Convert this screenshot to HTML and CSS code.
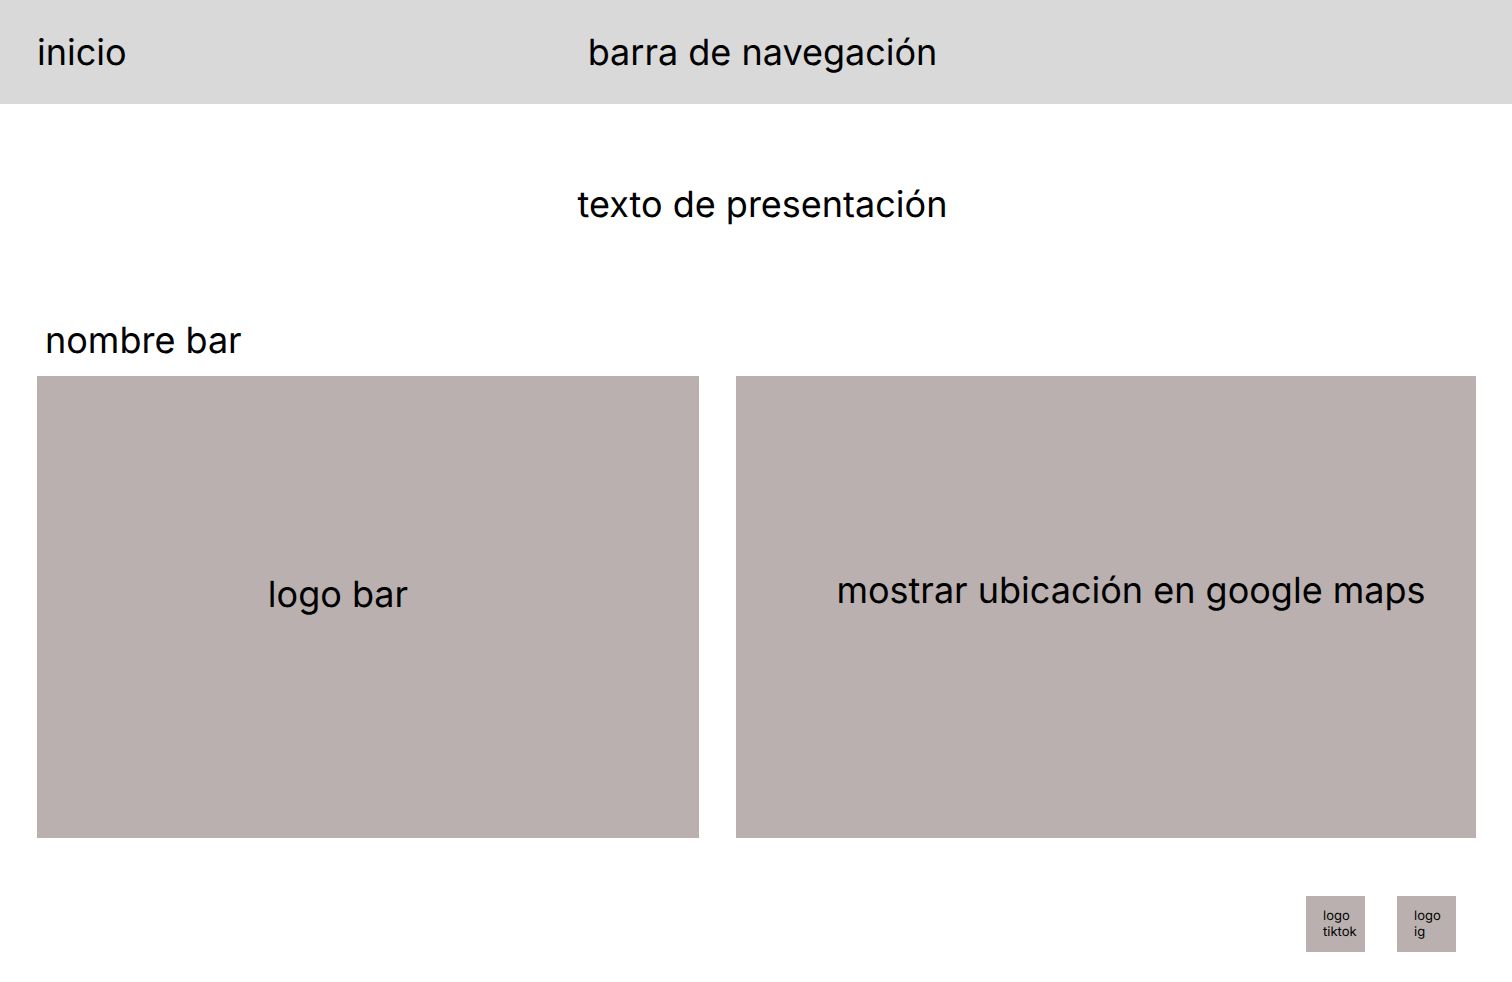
FILE: index.html
```html
<!DOCTYPE html>
<html lang="es">
<head>
<meta charset="utf-8">
<meta name="viewport" content="width=device-width, initial-scale=1">
<title>Nombre bar</title>
<link rel="stylesheet" href="styles.css">
</head>
<body>
<header class="navbar">
  <a class="home" href="#">inicio</a>
  <span class="nav-title">barra de navegación</span>
</header>
<main class="content">
  <p class="intro">texto de presentación</p>
  <h1 class="bar-name">nombre bar</h1>
  <div class="panels">
    <section class="panel panel-logo">logo bar</section>
    <section class="panel panel-map">mostrar ubicación en google maps</section>
  </div>
</main>
<footer class="social">
  <a class="social-link" href="#">logo tiktok</a>
  <a class="social-link" href="#">logo ig</a>
</footer>
</body>
</html>
```
FILE: styles.css
```css
* {
  box-sizing: border-box;
}

body {
  margin: 0;
  background: #fff;
  color: #000;
  font-family: Inter, "Liberation Sans", sans-serif;
  font-size: 36px;
  font-weight: 400;
  line-height: 44px;
  text-rendering: geometricPrecision;
}

a {
  color: inherit;
  text-decoration: none;
}

.navbar {
  display: grid;
  grid-template-columns: 1fr auto 1fr;
  align-items: center;
  padding: 30px 24px 30px 37px;
  background: #d9d9d9;
}

.home {
  justify-self: start;
}

.content {
  padding: 78px 36px 0 37px;
}

.intro {
  margin: 0 0 92px;
  padding-left: 12px;
  text-align: center;
}

.bar-name {
  margin: 0 0 14px;
  padding-left: 8px;
  font-size: inherit;
  font-weight: inherit;
}

.panels {
  display: grid;
  grid-template-columns: 662fr 740fr;
  gap: 37px;
}

.panel {
  display: flex;
  align-items: center;
  justify-content: center;
  min-height: 462px;
  background: #bab0af;
}

.panel-logo {
  padding: 0 60px 26px 0;
}

.panel-map {
  padding: 0 0 34px 50px;
}

.social {
  display: flex;
  justify-content: flex-end;
  gap: 32px;
  padding: 58px 56px 30px;
}

.social-link {
  width: 59px;
  height: 56px;
  padding: 12px 6px 12px 17px;
  background: #bab0af;
  font-size: 13px;
  line-height: 16px;
}
```
